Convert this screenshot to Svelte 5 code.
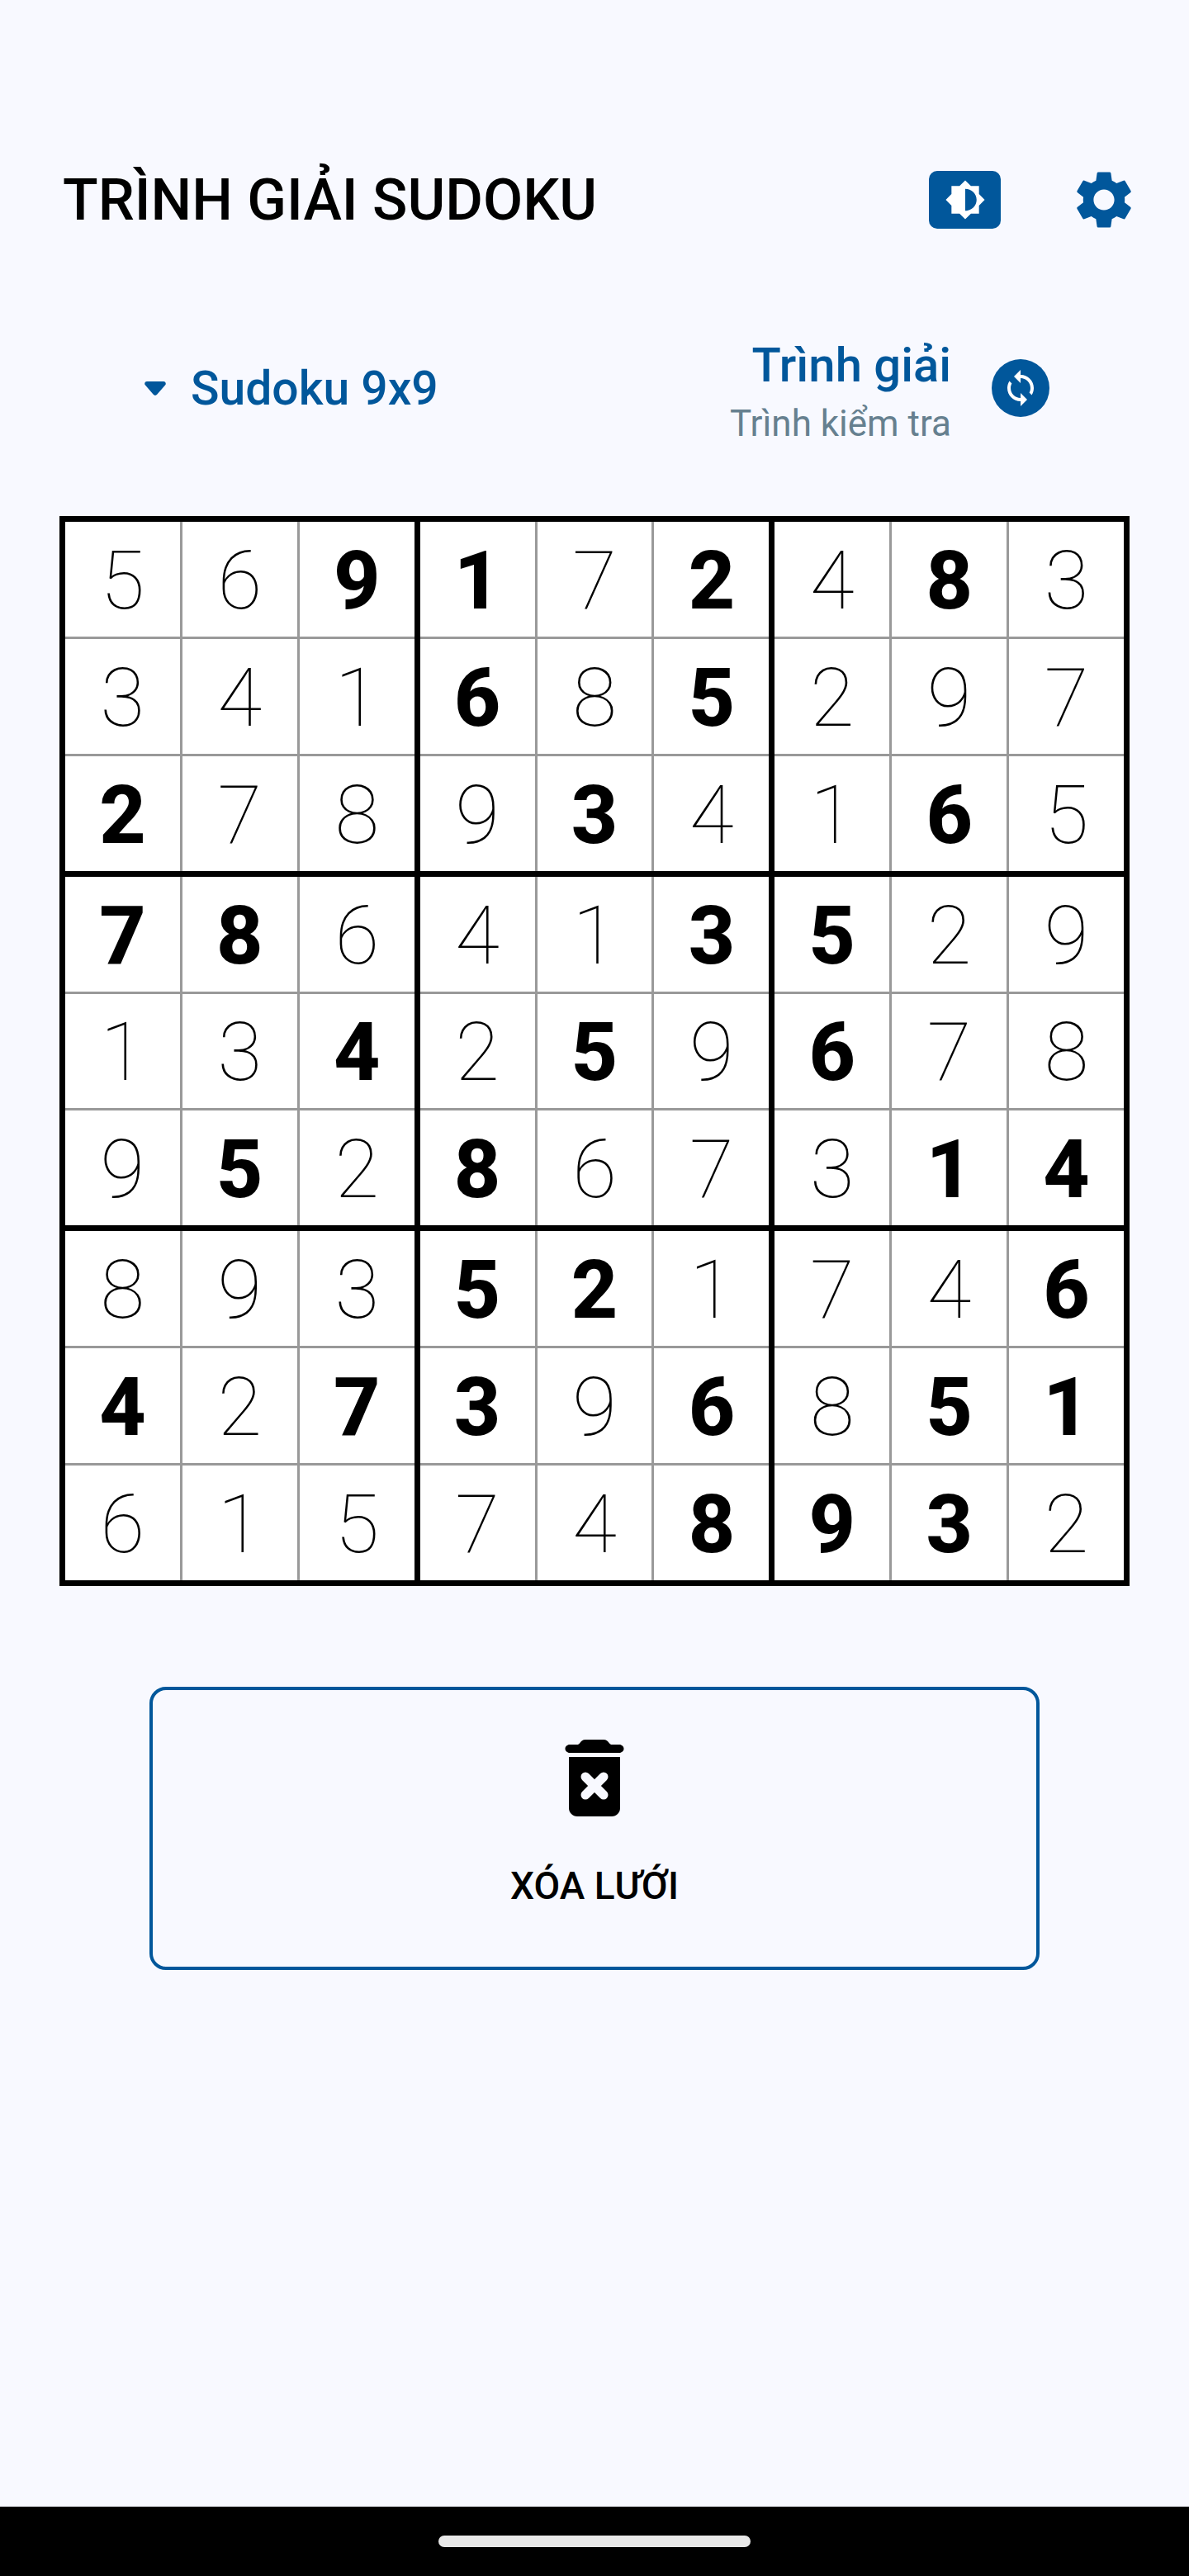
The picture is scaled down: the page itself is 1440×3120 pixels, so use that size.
<script>
  // solved grid, and which digits were typed in by the user (shown bold)
  const rows = [
    '569172483',
    '341685297',
    '278934165',
    '786413529',
    '134259678',
    '952867314',
    '893521746',
    '427396851',
    '615748932'
  ];
  const given = [
    '001101010',
    '000101000',
    '100010010',
    '110001100',
    '001010100',
    '010100011',
    '000110001',
    '101101011',
    '000001110'
  ];

  const three = [0, 1, 2];
</script>

<div class="page">
  <header class="header">
    <h1>TRÌNH GIẢI SUDOKU</h1>
    <div class="actions">
      <button class="brightness" aria-label="Giao diện">
        <svg viewBox="0 0 24 24" width="50" height="50">
          <path fill="#fff" fill-rule="evenodd" d="M20 15.31L23.31 12 20 8.69V4h-4.69L12 .69 8.69 4H4v4.69L.69 12 4 15.31V20h4.69L12 23.31 15.31 20H20v-4.69zM12 18.4V5.6c3.6 0 6.6 2.8 6.6 6.4s-3 6.4-6.6 6.4z" />
        </svg>
      </button>
      <button class="gear" aria-label="Cài đặt">
        <svg viewBox="0 0 24 24" width="84" height="84">
          <path fill="#01579b" d="M19.14 12.94c.04-.3.06-.61.06-.94 0-.32-.02-.64-.07-.94l2.03-1.58a.49.49 0 0 0 .12-.61l-1.92-3.32a.488.488 0 0 0-.59-.22l-2.39.96c-.5-.38-1.03-.7-1.62-.94l-.36-2.54a.484.484 0 0 0-.48-.41h-3.84c-.24 0-.43.17-.47.41l-.36 2.54c-.59.24-1.13.57-1.62.94l-2.39-.96c-.22-.08-.47 0-.59.22L2.74 8.87c-.12.21-.08.47.12.61l2.03 1.58c-.05.3-.09.63-.09.94s.02.64.07.94l-2.03 1.58a.49.49 0 0 0-.12.61l1.92 3.32c.12.22.37.29.59.22l2.39-.96c.5.38 1.03.7 1.62.94l.36 2.54c.05.24.24.41.48.41h3.84c.24 0 .44-.17.47-.41l.36-2.54c.59-.24 1.13-.56 1.62-.94l2.39.96c.22.08.47 0 .59-.22l1.92-3.32c.12-.22.07-.47-.12-.61l-2.01-1.58zM12 15.6c-1.98 0-3.6-1.62-3.6-3.6s1.62-3.6 3.6-3.6 3.6 1.62 3.6 3.6-1.62 3.6-3.6 3.6z" />
        </svg>
      </button>
    </div>
  </header>

  <section class="selector">
    <div class="type">
      <svg viewBox="0 0 26 17" width="26" height="17">
        <path fill="#01579b" d="M3 0h20c2.5 0 3.7 2.8 2 4.6L15.2 15.8c-1.2 1.5-3.3 1.5-4.5 0L1 4.6C-.7 2.8.5 0 3 0z" />
      </svg>
      <span>Sudoku 9x9</span>
    </div>
    <div class="mode">
      <div class="mode-text">
        <span class="active">Trình giải</span>
        <span class="other">Trình kiểm tra</span>
      </div>
      <div class="swap">
        <svg viewBox="0 0 24 24" width="48" height="48">
          <path fill="#fff" d="M12 4V1L8 5l4 4V6c3.31 0 6 2.69 6 6 0 1.01-.25 1.97-.7 2.8l1.46 1.46C19.54 15.03 20 13.57 20 12c0-4.42-3.58-8-8-8zm0 14c-3.31 0-6-2.69-6-6 0-1.01.25-1.97.7-2.8L5.24 7.74C4.46 8.97 4 10.43 4 12c0 4.42 3.58 8 8 8v3l4-4-4-4v3z" />
        </svg>
      </div>
    </div>
  </section>

  <div class="board">
    {#each three as by}
      {#each three as bx}
        <div class="box">
          {#each three as y}
            {#each three as x}
              {@const r = by * 3 + y}
              {@const c = bx * 3 + x}
              <div class="cell" class:bold={given[r][c] === '1'}>{rows[r][c]}</div>
            {/each}
          {/each}
        </div>
      {/each}
    {/each}
  </div>

  <button class="clear">
    <svg viewBox="0 0 72 93" width="72" height="93">
      <path d="M18 4.5C19.5 1.800 22 0 25 0h22c3 0 5.500 1.800 7 4.500L56 6h10c3 0 5.500 2.400 5.500 5s-2.500 5-5.500 5H6c-3 0-5.500-2.400-5.500-5S3 6 6 6h10z" />
      <path d="M5 21h62v62c0 5.500-4.500 10-10 10H15C9.500 93 5 88.500 5 83z" />
      <path class="x" d="M25 45l22 22M47 45L25 67" />
    </svg>
    <span>XÓA LƯỚI</span>
  </button>

  <footer class="navbar">
    <div class="pill"></div>
  </footer>
</div>

<style>
  :global(body) {
    margin: 0;
    background: #f8f9ff;
  }

  .page {
    height: 3120px;
    display: flex;
    flex-direction: column;
    padding-top: 200px;
    box-sizing: border-box;
    font-family: Roboto, "Noto Sans", sans-serif;
    color: #000;
  }

  button {
    border: none;
    background: none;
    padding: 0;
    font: inherit;
    color: inherit;
  }

  .header {
    height: 84px;
    display: flex;
    align-items: center;
    justify-content: space-between;
    padding: 0 61px 0 76px;
  }

  h1 {
    margin: 0;
    font-size: 70px;
    font-weight: 500;
    white-space: nowrap;
  }

  .actions {
    display: flex;
    align-items: center;
    gap: 83px;
  }

  .brightness {
    width: 87px;
    height: 70px;
    background: #01579b;
    border-radius: 10px;
    display: flex;
    align-items: center;
    justify-content: center;
  }

  .gear {
    display: flex;
  }

  .selector {
    height: 140px;
    margin-top: 116px;
    display: flex;
    align-items: center;
    justify-content: space-between;
    padding: 0 169px 0 175px;
  }

  .type {
    display: flex;
    align-items: center;
    gap: 30px;
    font-size: 57px;
    font-weight: 500;
    color: #01579b;
  }

  .mode {
    display: flex;
    align-items: center;
    gap: 49px;
  }

  .mode-text {
    display: flex;
    flex-direction: column;
    align-items: flex-end;
    padding-top: 12px;
  }

  .active {
    font-size: 58px;
    font-weight: 500;
    line-height: 70px;
    color: #01579b;
  }

  .other {
    font-size: 44px;
    line-height: 64px;
    margin-top: 4px;
    color: #66808f;
  }

  .swap {
    width: 70px;
    height: 70px;
    border-radius: 50%;
    background: #01579b;
    display: flex;
    align-items: center;
    justify-content: center;
  }

  .board {
    width: 1296px;
    height: 1296px;
    margin: 85px 0 0 72px;
    box-sizing: border-box;
    padding: 7px;
    background: #000;
    display: grid;
    grid-template-columns: repeat(3, 1fr);
    grid-template-rows: repeat(3, 1fr);
    gap: 7px;
  }

  .box {
    background: #999;
    display: grid;
    grid-template-columns: repeat(3, 1fr);
    grid-template-rows: repeat(3, 1fr);
    gap: 3px;
  }

  .cell {
    background: #fff;
    display: flex;
    align-items: center;
    justify-content: center;
    font-size: 98px;
    font-weight: 100;
    line-height: 1;
    padding-top: 5px;
    box-sizing: border-box;
  }

  .cell.bold {
    font-weight: 800;
  }

  .clear {
    width: 1078px;
    height: 343px;
    margin: 122px 0 0 181px;
    box-sizing: border-box;
    border: 4px solid #01579b;
    border-radius: 20px;
    display: flex;
    flex-direction: column;
    align-items: center;
    padding-top: 60px;
    gap: 57px;
    font-size: 46px;
    font-weight: 500;
  }

  .clear svg path {
    fill: #000;
  }

  .clear svg path.x {
    fill: none;
    stroke: #f8f9ff;
    stroke-width: 11;
    stroke-linecap: round;
  }

  .navbar {
    margin-top: auto;
    height: 84px;
    background: #000;
    display: flex;
    justify-content: center;
    padding-top: 35px;
    box-sizing: border-box;
  }

  .pill {
    width: 378px;
    height: 14px;
    border-radius: 7px;
    background: #e8e8e8;
  }
</style>
